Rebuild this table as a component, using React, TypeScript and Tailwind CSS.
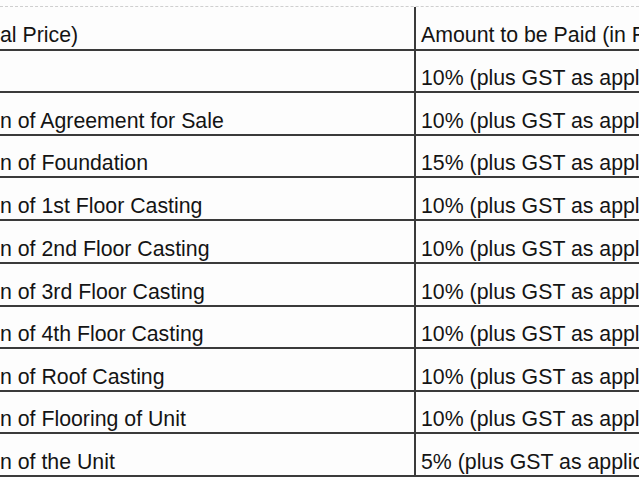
import React from "react";

const rows: { left: string; right: string; h: number }[] = [
  { left: "", right: "10% (plus GST as applicable)", h: 42 },
  { left: "n of Agreement for Sale", right: "10% (plus GST as applicable)", h: 43 },
  { left: "n of Foundation", right: "15% (plus GST as applicable)", h: 42 },
  { left: "n of 1st Floor Casting", right: "10% (plus GST as applicable)", h: 43 },
  { left: "n of 2nd Floor Casting", right: "10% (plus GST as applicable)", h: 43 },
  { left: "n of 3rd Floor Casting", right: "10% (plus GST as applicable)", h: 43 },
  { left: "n of 4th Floor Casting", right: "10% (plus GST as applicable)", h: 42 },
  { left: "n of Roof Casting", right: "10% (plus GST as applicable)", h: 43 },
  { left: "n of Flooring of Unit", right: "10% (plus GST as applicable)", h: 42 },
  { left: "n of the Unit", right: "5% (plus GST as applicable)", h: 43 },
];

function Row({ left, right, h }: { left: string; right: string; h: number }) {
  return (
    <div
      className="flex border-b-2 border-[#3a3a3a] whitespace-nowrap"
      style={{ height: h }}
    >
      <div className="w-[414px] shrink-0 flex items-end pb-[1px] overflow-hidden">
        <span>{left}</span>
      </div>
      <div className="flex-1 border-l-2 border-[#3a3a3a] pl-[5px] flex items-end pb-[1px] overflow-hidden">
        <span>{right}</span>
      </div>
    </div>
  );
}

export default function App() {
  return (
    <div
      className="w-[639px] h-[480px] overflow-hidden bg-[#fdfdfd] text-[#141414] text-[21.3px] leading-[24px]"
      style={{ fontFamily: '"Liberation Sans", Arial, sans-serif' }}
    >
      <div className="h-[6px]" />
      <div className="border-t border-dashed border-[#cfcfcf]" />
      <div className="w-[700px]">
        <div className="flex border-b-2 border-[#3a3a3a] whitespace-nowrap h-[44px]">
          <div className="w-[414px] shrink-0 flex items-end pb-[2px] overflow-hidden">
            <span>al Price)</span>
          </div>
          <div className="flex-1 border-l-2 border-[#3a3a3a] pl-[5px] flex items-end pb-[2px] overflow-hidden">
            <span>Amount to be Paid (in Rs.)</span>
          </div>
        </div>
        {rows.map((r, i) => (
          <Row key={i} {...r} />
        ))}
      </div>
    </div>
  );
}
